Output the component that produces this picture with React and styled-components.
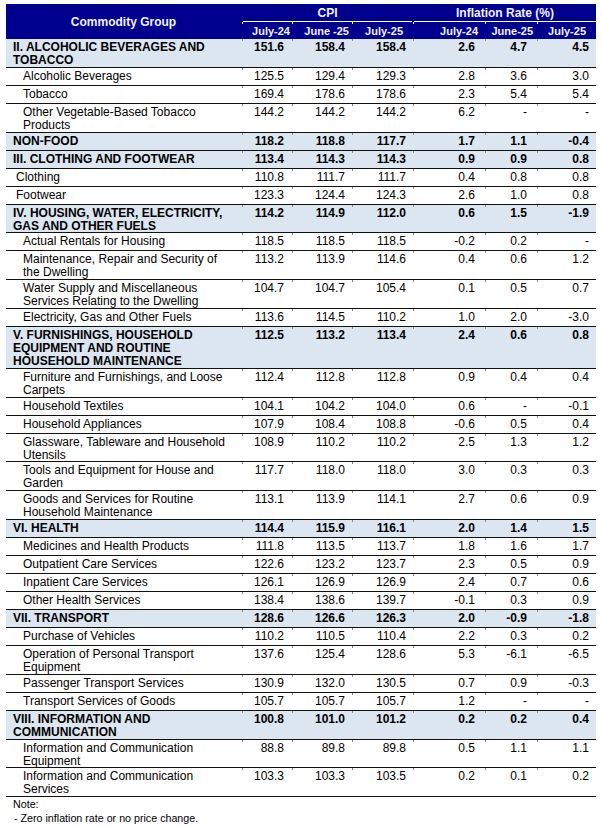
import React from 'react';
import styled, { createGlobalStyle } from 'styled-components';

const NAVY = '#00008f';
const SHADE = '#dce6f1';

// column widths and right padding for the values / sub header labels
const COLUMNS = [
  { width: 50, pad: 8, headPad: 2 },
  { width: 60, pad: 7, headPad: 3 },
  { width: 61, pad: 7, headPad: 10 },
  { width: 72, pad: 10, headPad: 7 },
  { width: 52, pad: 10, headPad: 4 },
  { width: 59, pad: 7, headPad: 10 },
];

const SUB_HEADS = ['July-24', 'June -25', 'July-25', 'July-24', 'June-25', 'July-25'];

const ROWS = [
  ['cat', 'II. ALCOHOLIC BEVERAGES AND TOBACCO', '151.6', '158.4', '158.4', '2.6', '4.7', '4.5'],
  ['sub', 'Alcoholic Beverages', '125.5', '129.4', '129.3', '2.8', '3.6', '3.0'],
  ['sub', 'Tobacco', '169.4', '178.6', '178.6', '2.3', '5.4', '5.4'],
  ['sub', 'Other Vegetable-Based Tobacco Products', '144.2', '144.2', '144.2', '6.2', '-', '-'],
  ['cat', 'NON-FOOD', '118.2', '118.8', '117.7', '1.7', '1.1', '-0.4'],
  ['cat', 'III. CLOTHING AND FOOTWEAR', '113.4', '114.3', '114.3', '0.9', '0.9', '0.8'],
  ['item', 'Clothing', '110.8', '111.7', '111.7', '0.4', '0.8', '0.8'],
  ['item', 'Footwear', '123.3', '124.4', '124.3', '2.6', '1.0', '0.8'],
  ['cat', 'IV. HOUSING, WATER, ELECTRICITY, GAS AND OTHER FUELS', '114.2', '114.9', '112.0', '0.6', '1.5', '-1.9'],
  ['sub', 'Actual Rentals for Housing', '118.5', '118.5', '118.5', '-0.2', '0.2', '-'],
  ['sub', 'Maintenance, Repair and Security of the Dwelling', '113.2', '113.9', '114.6', '0.4', '0.6', '1.2'],
  ['sub', 'Water Supply and Miscellaneous Services Relating to the Dwelling', '104.7', '104.7', '105.4', '0.1', '0.5', '0.7'],
  ['sub', 'Electricity, Gas and Other Fuels', '113.6', '114.5', '110.2', '1.0', '2.0', '-3.0'],
  ['cat', 'V. FURNISHINGS, HOUSEHOLD EQUIPMENT AND ROUTINE HOUSEHOLD MAINTENANCE', '112.5', '113.2', '113.4', '2.4', '0.6', '0.8'],
  ['sub', 'Furniture and Furnishings, and Loose Carpets', '112.4', '112.8', '112.8', '0.9', '0.4', '0.4'],
  ['sub', 'Household Textiles', '104.1', '104.2', '104.0', '0.6', '-', '-0.1'],
  ['sub', 'Household Appliances', '107.9', '108.4', '108.8', '-0.6', '0.5', '0.4'],
  ['sub', 'Glassware, Tableware and Household Utensils', '108.9', '110.2', '110.2', '2.5', '1.3', '1.2'],
  ['sub', 'Tools and Equipment for House and Garden', '117.7', '118.0', '118.0', '3.0', '0.3', '0.3'],
  ['sub', 'Goods and Services for Routine Household Maintenance', '113.1', '113.9', '114.1', '2.7', '0.6', '0.9'],
  ['cat', 'VI. HEALTH', '114.4', '115.9', '116.1', '2.0', '1.4', '1.5'],
  ['sub', 'Medicines and Health Products', '111.8', '113.5', '113.7', '1.8', '1.6', '1.7'],
  ['sub', 'Outpatient Care Services', '122.6', '123.2', '123.7', '2.3', '0.5', '0.9'],
  ['sub', 'Inpatient Care Services', '126.1', '126.9', '126.9', '2.4', '0.7', '0.6'],
  ['sub', 'Other Health Services', '138.4', '138.6', '139.7', '-0.1', '0.3', '0.9'],
  ['cat', 'VII. TRANSPORT', '128.6', '126.6', '126.3', '2.0', '-0.9', '-1.8'],
  ['sub', 'Purchase of Vehicles', '110.2', '110.5', '110.4', '2.2', '0.3', '0.2'],
  ['sub', 'Operation of Personal Transport Equipment', '137.6', '125.4', '128.6', '5.3', '-6.1', '-6.5'],
  ['sub', 'Passenger Transport Services', '130.9', '132.0', '130.5', '0.7', '0.9', '-0.3'],
  ['sub', 'Transport Services of Goods', '105.7', '105.7', '105.7', '1.2', '-', '-'],
  ['cat', 'VIII. INFORMATION AND COMMUNICATION', '100.8', '101.0', '101.2', '0.2', '0.2', '0.4'],
  ['sub', 'Information and Communication Equipment', '88.8', '89.8', '89.8', '0.5', '1.1', '1.1'],
  ['sub', 'Information and Communication Services', '103.3', '103.3', '103.5', '0.2', '0.1', '0.2'],
];

const INDENT = { cat: 7, item: 10, sub: 17 };

export default function App() {
  return (
    <>
      <GlobalStyle />
      <Page>
        <Table>
          <colgroup>
            <col style={{ width: 236 }} />
            {COLUMNS.map((c, i) => (
              <col key={i} style={{ width: c.width }} />
            ))}
          </colgroup>
          <thead>
            <tr>
              <GroupHead rowSpan={2}>Commodity Group</GroupHead>
              <SpanHead colSpan={3}>CPI</SpanHead>
              <SpanHead colSpan={3}>Inflation Rate (%)</SpanHead>
            </tr>
            <tr>
              {SUB_HEADS.map((h, i) => (
                <SubHead key={i} $pad={COLUMNS[i].headPad}>
                  {h}
                </SubHead>
              ))}
            </tr>
          </thead>
          <tbody>
            {ROWS.map(([kind, label, ...values]) => (
              <Row key={label} $cat={kind === 'cat'}>
                <LabelCell $indent={INDENT[kind]}>{label}</LabelCell>
                {values.map((v, i) => (
                  <NumCell key={i} $pad={COLUMNS[i].pad}>
                    {v}
                  </NumCell>
                ))}
              </Row>
            ))}
          </tbody>
        </Table>
        <Note>
          <div>Note:</div>
          <NoteLine>- Zero inflation rate or no price change.</NoteLine>
        </Note>
      </Page>
    </>
  );
}

const GlobalStyle = createGlobalStyle`
  body {
    margin: 0;
    background: #fff;
    font-family: "Liberation Sans", Arial, sans-serif;
    color: #000;
  }
`;

const Page = styled.div`
  width: 603px;
  padding: 4px 7px 0 6px;
  box-sizing: border-box;
`;

const Table = styled.table`
  width: 590px;
  table-layout: fixed;
  border-collapse: collapse;
  border-spacing: 0;
  font-size: 12px;
`;

const HeadBase = styled.th`
  background: ${NAVY};
  color: #f2f2ff;
  font-weight: bold;
  padding: 0;
  height: 17px;
  line-height: 14px;
`;

const GroupHead = styled(HeadBase)`
  font-size: 12px;
  text-align: center;
  vertical-align: middle;
`;

const SpanHead = styled(HeadBase)`
  font-size: 12px;
  text-align: center;
  border-bottom: 1px solid #fff;
  border-left: 2px solid ${NAVY};
`;

const SubHead = styled(HeadBase)`
  font-size: 11px;
  text-align: right;
  padding-right: ${(p) => p.$pad}px;
  white-space: nowrap;
  background-image: linear-gradient(#fff, #fff);
  background-size: 1px 2px;
  background-position: left top;
  background-repeat: no-repeat;
`;

const Row = styled.tr`
  height: 18px;
  background: ${(p) => (p.$cat ? SHADE : '#fff')};
  font-weight: ${(p) => (p.$cat ? 'bold' : 'normal')};
  border-top: 1px solid #111;

  &:first-child {
    border-top: none;
  }

  &:last-child {
    border-bottom: 1px solid #111;
  }
`;

const LabelCell = styled.td`
  padding: 2px 8px 0 ${(p) => p.$indent}px;
  line-height: 12.9px;
  vertical-align: top;
`;

const NumCell = styled.td`
  padding: 2px ${(p) => p.$pad}px 0 0;
  line-height: 12.9px;
  text-align: right;
  vertical-align: top;
  white-space: nowrap;
  background-image: linear-gradient(#8a8a8a, #8a8a8a);
  background-size: 1px 2px;
  background-position: left top;
  background-repeat: no-repeat;
`;

const Note = styled.div`
  padding: 0 0 0 7px;
  font-size: 10.7px;
  line-height: 14px;
`;

const NoteLine = styled.div`
  padding-left: 1px;
`;
